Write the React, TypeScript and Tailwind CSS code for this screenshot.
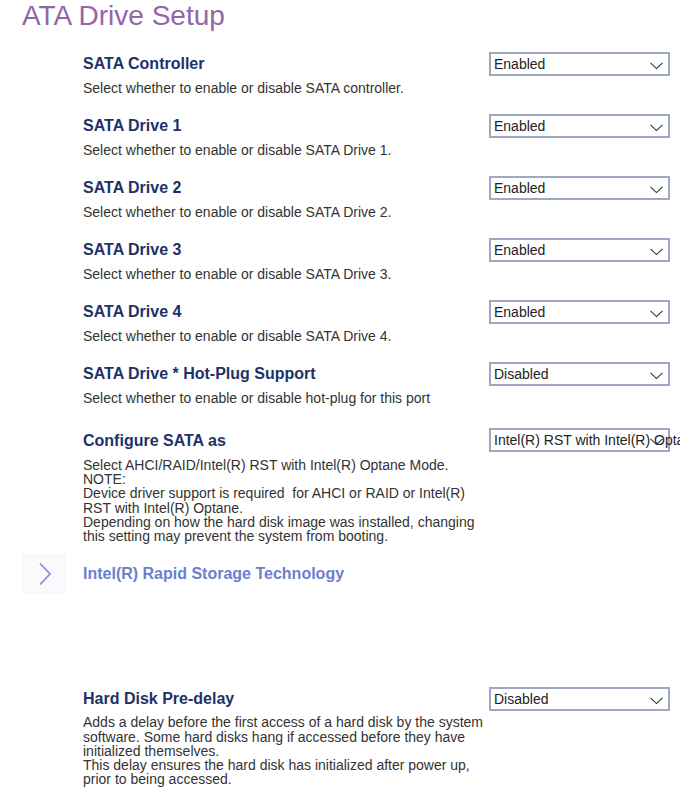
import React from "react";

const Chevron = () => (
  <svg width="13" height="8" viewBox="0 0 13 8" className="absolute right-[5px] top-[8px]">
    <path d="M0.5 0.8 L6.5 6.6 L12.5 0.8" fill="none" stroke="#333" strokeWidth="1.1" />
  </svg>
);

const Select = ({ value, cls = "-mt-[2px]" }: { value: string; cls?: string }) => (
  <div className={"relative w-[181px] h-[24px] border-2 border-[#9fa8c3] bg-white shrink-0 " + cls}>
    <div className="pl-[3px] text-[14px] leading-[20px] text-[#222] whitespace-nowrap">{value}</div>
    <Chevron />
  </div>
);

const Row = ({
  title,
  lines,
  value,
  cls,
}: {
  title: string;
  lines: string[];
  value: string;
  cls: string;
}) => (
  <div className={"flex " + cls}>
    <div className="w-[406px] shrink-0">
      <div className="text-[16px] leading-[20px] font-bold text-[#1e3268]">{title}</div>
      <div className="mt-[7px] mb-[1px] text-[14px] leading-[14px] text-[#333]">
        {lines.map((l, i) => (
          <div key={i} className="whitespace-nowrap">
            {l}
          </div>
        ))}
      </div>
    </div>
    <Select value={value} />
  </div>
);

export default function App() {
  return (
    <div
      className="w-[680px] h-[787px] bg-white overflow-hidden"
      style={{ fontFamily: '"Liberation Sans", Arial, sans-serif' }}
    >
      <div className="pl-[22px] text-[28px] leading-[32px] text-[#9066a8]">ATA Drive Setup</div>
      <div className="pl-[83px]">
        <Row cls="mt-[22px]" title="SATA Controller" lines={["Select whether to enable or disable SATA controller."]} value="Enabled" />
        <Row cls="mt-[20px]" title="SATA Drive 1" lines={["Select whether to enable or disable SATA Drive 1."]} value="Enabled" />
        <Row cls="mt-[20px]" title="SATA Drive 2" lines={["Select whether to enable or disable SATA Drive 2."]} value="Enabled" />
        <Row cls="mt-[20px]" title="SATA Drive 3" lines={["Select whether to enable or disable SATA Drive 3."]} value="Enabled" />
        <Row cls="mt-[20px]" title="SATA Drive 4" lines={["Select whether to enable or disable SATA Drive 4."]} value="Enabled" />
        <Row cls="mt-[20px]" title="SATA Drive * Hot-Plug Support" lines={["Select whether to enable or disable hot-plug for this port"]} value="Disabled" />
        <div className="flex mt-[25px]">
          <div className="w-[406px] shrink-0">
            <div className="text-[16px] leading-[20px] font-bold text-[#1e3268]">Configure SATA as</div>
            <div className="mt-[7px] mb-[1px] text-[14px] leading-[14.2px] text-[#333]">
              <div className="whitespace-nowrap">Select AHCI/RAID/Intel(R) RST with Intel(R) Optane Mode.</div>
              <div className="whitespace-nowrap">NOTE:</div>
              <div className="whitespace-pre">Device driver support is required  for AHCI or RAID or Intel(R)</div>
              <div className="whitespace-nowrap">RST with Intel(R) Optane.</div>
              <div className="whitespace-nowrap">Depending on how the hard disk image was installed, changing</div>
              <div className="whitespace-nowrap">this setting may prevent the system from booting.</div>
            </div>
          </div>
          <Select value="Intel(R) RST with Intel(R) Optane" cls="-mt-[3px]" />
        </div>
      </div>
      <div className="flex items-center h-[40px] mt-[10px]">
        <div className="ml-[22px] w-[44px] h-[40px] bg-[#fafafc] flex items-center justify-center">
          <svg width="14" height="24" viewBox="0 0 14 24" className="ml-[2px]">
            <path d="M2 1.5 L12 12 L2 22.5" fill="none" stroke="#7f92d6" strokeWidth="1.8" />
          </svg>
        </div>
        <div className="ml-[17px] text-[16px] leading-[20px] font-bold text-[#6c7fcc]">Intel(R) Rapid Storage Technology</div>
      </div>
      <div className="pl-[83px]">
        <div className="flex mt-[95px]">
          <div className="w-[406px] shrink-0">
            <div className="text-[16px] leading-[20px] font-bold text-[#1e3268]">Hard Disk Pre-delay</div>
            <div className="mt-[6px] text-[14px] leading-[14.3px] text-[#333]">
              <div className="whitespace-nowrap">Adds a delay before the first access of a hard disk by the system</div>
              <div className="whitespace-nowrap">software. Some hard disks hang if accessed before they have</div>
              <div className="whitespace-nowrap">initialized themselves.</div>
              <div className="whitespace-nowrap">This delay ensures the hard disk has initialized after power up,</div>
              <div className="whitespace-nowrap">prior to being accessed.</div>
            </div>
          </div>
          <Select value="Disabled" />
        </div>
      </div>
    </div>
  );
}
